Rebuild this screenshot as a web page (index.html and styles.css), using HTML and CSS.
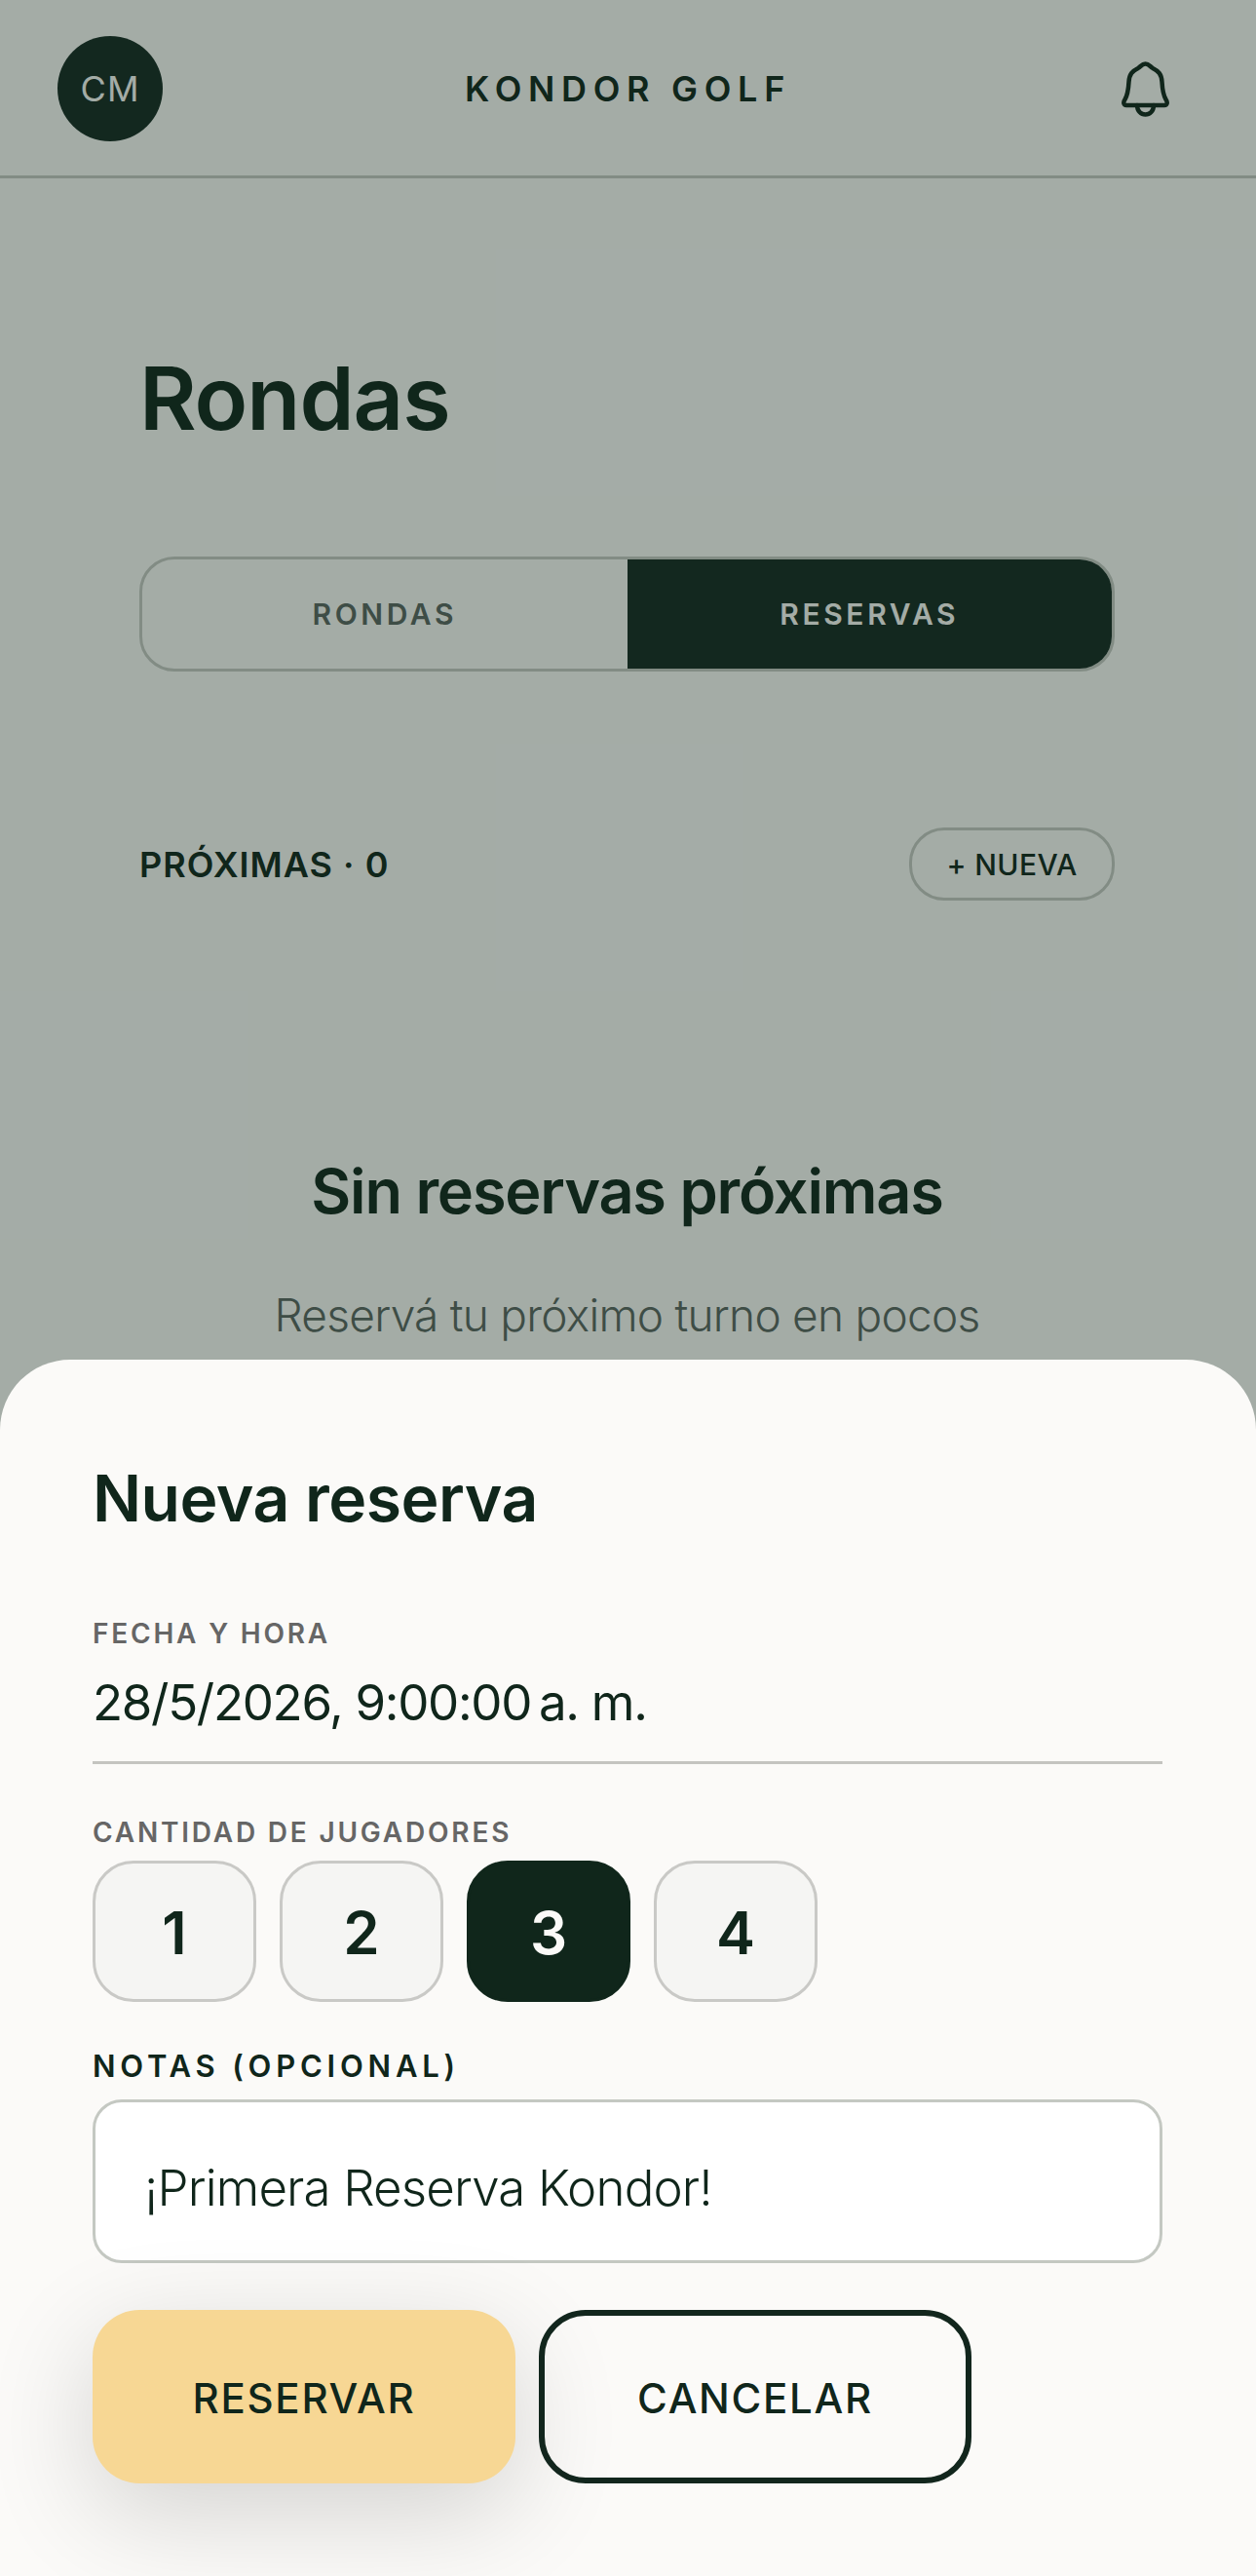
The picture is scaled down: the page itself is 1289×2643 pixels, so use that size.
FILE: index.html
```html
<!DOCTYPE html>
<html lang="es">
<head>
  <meta charset="UTF-8" />
  <title>Rondas - Kondor Golf</title>
  <link rel="stylesheet" href="styles.css">
</head>
<body>

  <div class="page">
    <header class="topbar">
      <div class="avatar">CM</div>
      <div class="brand">KONDOR GOLF</div>
      <div class="bell">
        <svg width="50" height="57" viewBox="0 0 50 57" fill="none" stroke="#10261b" stroke-width="4.5" stroke-linejoin="round" stroke-linecap="round">
          <path d="M24.5 2.5C21 2.5 20 5 17 7C11 10 8 13 7.5 21C7 30 6.5 34 3.5 39C1.5 42 2 45 5 45H44C47 45 47.5 42 45.5 39C42.5 34 42 30 41.5 21C41 13 38 10 32 7C29 5 28 2.5 24.5 2.5Z" />
          <path d="M16 45C16 51 20 54.5 24.5 54.5C29 54.5 33 51 33 45" />
        </svg>
      </div>
    </header>

    <main class="content">
      <h1 class="page-title">Rondas</h1>

      <div class="tabs">
        <div class="tab">RONDAS</div>
        <div class="tab active">RESERVAS</div>
      </div>

      <div class="list-head">
        <div class="list-count">PRÓXIMAS · 0</div>
        <div class="new-btn">+ NUEVA</div>
      </div>

      <div class="empty">
        <h2 class="empty-title">Sin reservas próximas</h2>
        <p class="empty-text">Reservá tu próximo turno en pocos</p>
      </div>
    </main>

    <div class="overlay"></div>

    <section class="sheet">
      <h2 class="sheet-title">Nueva reserva</h2>

      <div class="field-label first">FECHA Y HORA</div>
      <div class="date-value">28/5/2026, 9:00:00&#8239;a.&nbsp;m.</div>

      <div class="field-label players">CANTIDAD DE JUGADORES</div>
      <div class="player-row">
        <div class="player">1</div>
        <div class="player">2</div>
        <div class="player active">3</div>
        <div class="player">4</div>
      </div>

      <div class="notes-label">NOTAS (OPCIONAL)</div>
      <div class="notes-box">¡Primera Reserva Kondor!</div>

      <div class="actions">
        <div class="btn btn-primary">RESERVAR</div>
        <div class="btn btn-outline">CANCELAR</div>
      </div>
    </section>
  </div>

</body>
</html>
```

FILE: styles.css
```css
* {
  box-sizing: border-box;
}
body {
  margin: 0;
  background: #fbfaf8;
  color: #10261b;
  font-family: Inter, "Noto Sans", sans-serif;
}
h1, h2, p {
  margin: 0;
}

.page {
  position: relative;
  height: 2643px;
  overflow: hidden;
}

.topbar {
  display: flex;
  justify-content: space-between;
  align-items: center;
  height: 183px;
  padding: 2px 59px 0;
  border-bottom: 3px solid #c4c8c2;
}
.avatar {
  display: flex;
  align-items: center;
  justify-content: center;
  width: 108px;
  height: 108px;
  border-radius: 50%;
  background: #152a22;
  color: #fbfaf8;
  font-size: 36px;
  letter-spacing: 1px;
}
.brand {
  font-size: 36px;
  font-weight: 600;
  letter-spacing: 6.7px;
}
.bell {
  display: flex;
  align-items: center;
  justify-content: center;
  width: 108px;
  height: 108px;
}

.content {
  padding: 0 145px 0 143px;
}
.page-title {
  margin-top: 172px;
  font-size: 90px;
  line-height: 108px;
  font-weight: 600;
  letter-spacing: -1px;
}

.tabs {
  display: flex;
  height: 118px;
  margin-top: 108px;
  border: 3px solid #c4c8c2;
  border-radius: 36px;
  overflow: hidden;
}
.tab {
  flex: 1;
  display: flex;
  align-items: center;
  justify-content: center;
  color: #5a655f;
  font-size: 30px;
  font-weight: 600;
  letter-spacing: 3.6px;
}
.tab.active {
  background: #152a22;
  color: #fbfaf8;
}

.list-head {
  display: flex;
  justify-content: space-between;
  align-items: center;
  margin-top: 160px;
}
.list-count {
  font-size: 36px;
  font-weight: 600;
  letter-spacing: 1px;
}
.new-btn {
  display: flex;
  align-items: center;
  justify-content: center;
  width: 211px;
  height: 75px;
  border: 3px solid #c4c8c2;
  border-radius: 36px;
  font-size: 30px;
  font-weight: 500;
  letter-spacing: 0.4px;
}

.empty {
  margin-top: 256px;
  text-align: center;
}
.empty-title {
  font-size: 63px;
  line-height: 84px;
  font-weight: 600;
  letter-spacing: -1.2px;
}
.empty-text {
  margin-top: 52px;
  color: #5a655f;
  font-size: 46px;
  line-height: 66px;
  font-weight: 300;
  letter-spacing: -0.75px;
}

.overlay {
  position: absolute;
  inset: 0;
  background: rgba(16, 38, 27, 0.37);
}

.sheet {
  position: absolute;
  left: 0;
  right: 0;
  top: 1395px;
  bottom: 0;
  padding: 100px 96px 0 95px;
  background: #fbfaf8;
  border-radius: 72px 72px 0 0;
}
.sheet-title {
  font-size: 66px;
  line-height: 84px;
  font-weight: 600;
  letter-spacing: -0.5px;
}

.field-label {
  color: #666;
  font-size: 28px;
  line-height: 36px;
  font-weight: 600;
  letter-spacing: 2.8px;
}
.field-label.first {
  margin-top: 79px;
}
.field-label.players {
  margin-top: 52px;
}
.date-value {
  margin-top: 20px;
  padding-bottom: 27px;
  border-bottom: 3px solid #c4c4c0;
  font-size: 51px;
  line-height: 66px;
  letter-spacing: -1.3px;
}

.player-row {
  display: flex;
  gap: 24px;
  margin-top: 11px;
}
.player {
  display: flex;
  align-items: center;
  justify-content: center;
  width: 168px;
  height: 145px;
  padding-top: 3px;
  border: 3px solid #c9c9c6;
  border-radius: 42px;
  background: #f5f5f3;
  font-size: 60px;
  font-weight: 600;
}
.player.active {
  border-color: #10261b;
  background: #10261b;
  color: #fbfaf8;
}

.notes-label {
  margin-top: 48px;
  font-size: 31px;
  line-height: 36px;
  font-weight: 600;
  letter-spacing: 4.8px;
}
.notes-box {
  height: 168px;
  margin-top: 16px;
  padding: 55px 50px 0;
  border: 3px solid #c4c8c2;
  border-radius: 30px;
  background: #fff;
  font-size: 51px;
  line-height: 66px;
  font-weight: 300;
  letter-spacing: -0.85px;
}

.actions {
  display: flex;
  gap: 24px;
  margin-top: 48px;
}
.btn {
  display: flex;
  align-items: center;
  justify-content: center;
  height: 178px;
  padding-top: 2px;
  border-radius: 48px;
  font-size: 42px;
  font-weight: 500;
  letter-spacing: 1.7px;
}
.btn-primary {
  width: 434px;
  background: #f7d794;
  box-shadow: 0 30px 110px rgba(0, 0, 0, 0.16);
}
.btn-outline {
  width: 444px;
  border: 6px solid #12261d;
}
```
